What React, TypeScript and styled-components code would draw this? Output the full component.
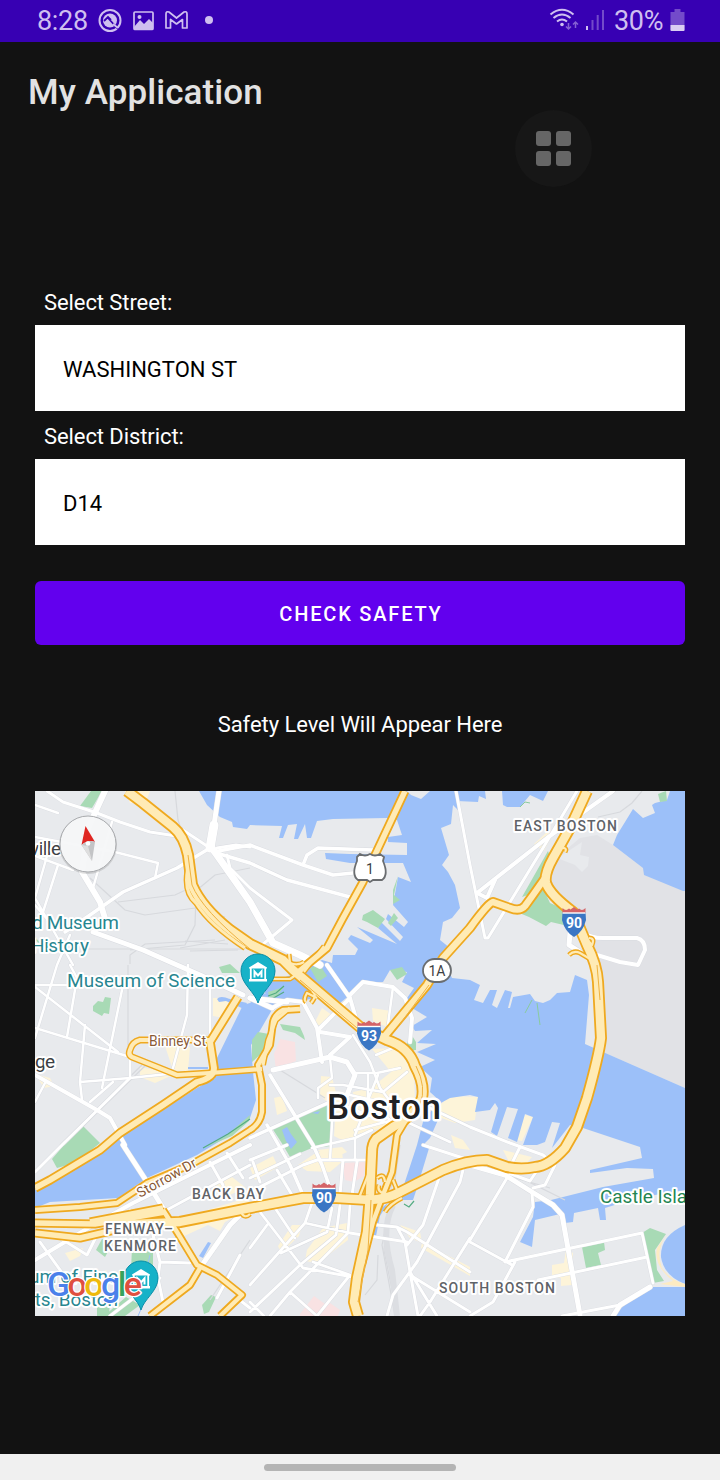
import React from 'react';
import styled, { createGlobalStyle } from 'styled-components';

const GlobalStyle = createGlobalStyle`
  * { box-sizing: border-box; }
  body { margin: 0; background: #121212; font-family: Roboto, sans-serif; }
`;

const Screen = styled.div`
  position: relative;
  display: flex;
  flex-direction: column;
  width: 720px;
  height: 1480px;
  background: #121212;
  overflow: hidden;
`;

const StatusBar = styled.header`
  display: flex;
  align-items: center;
  justify-content: space-between;
  flex: none;
  height: 42px;
  padding: 0 35px 0 37px;
  background: #3700b3;
  color: #cfbff0;
`;

const StatusGroup = styled.div<{ $gap: number }>`
  display: flex;
  align-items: center;
  gap: ${(p) => p.$gap}px;
  height: 42px;
`;

const StatusText = styled.span<{ $width: number }>`
  width: ${(p) => p.$width}px;
  font-size: 27px;
  line-height: 43px;
  letter-spacing: -0.3px;
  white-space: nowrap;
`;

const TitleBar = styled.div`
  display: flex;
  align-items: center;
  flex: none;
  height: 98px;
  padding: 4px 28px 0;
`;

const Title = styled.h1`
  margin: 0;
  font-size: 35px;
  font-weight: 500;
  line-height: 42px;
  letter-spacing: 0.08px;
  color: #e2e2e2;
`;

const Content = styled.main`
  display: flex;
  flex-direction: column;
  flex: 1;
  padding: 137px 35px 0;
`;

const Label = styled.label`
  height: 48px;
  padding: 0 9px;
  font-size: 22px;
  line-height: 52px;
  letter-spacing: -0.08px;
  color: #fff;
`;

const Field = styled.div`
  height: 86px;
  padding: 0 28px;
  background: #fff;
  color: #000;
  font-size: 22px;
  line-height: 89px;
`;

const SafetyButton = styled.button`
  height: 64px;
  margin-top: 36px;
  padding: 2px 0 0 2px;
  border: 0;
  border-radius: 6px;
  background: #6200ee;
  color: #fff;
  font: 500 20px/24px Roboto, sans-serif;
  letter-spacing: 1.8px;
`;

const Result = styled.p`
  margin: 64px 0 50px;
  font-size: 22px;
  line-height: 32px;
  letter-spacing: -0.06px;
  text-align: center;
  color: #fff;
`;

const MapFrame = styled.svg`
  display: block;
  width: 650px;
  height: 525px;
  background: #e8eaed;
  font-family: Roboto, sans-serif;
`;

const HaloText = styled.text<{ $halo?: number }>`
  paint-order: stroke;
  stroke: #fff;
  stroke-width: ${(p) => p.$halo ?? 4}px;
  stroke-linejoin: round;
`;

const NavBar = styled.footer`
  display: flex;
  align-items: center;
  justify-content: center;
  flex: none;
  height: 26px;
  background: #f0f0f0;
`;

const NavPill = styled.div`
  width: 192px;
  height: 7px;
  margin-top: 1px;
  border-radius: 4px;
  background: #b4b4b4;
`;

const AssistiveButton = styled.div`
  position: absolute;
  left: 515px;
  top: 110px;
  display: grid;
  grid-template-columns: 15px 15px;
  gap: 5px;
  place-content: center;
  width: 77px;
  height: 77px;
  border-radius: 50%;
  background: #171717;
`;

const Tile = styled.span`
  height: 15px;
  border-radius: 3px;
  background: #666;
`;

const WATER = [
  // Inner harbor, Mystic mouth and South Boston docks
  'M199 791 L207 805 220 817 232 822 233 827 247 829 250 825 282 826 279 838 283 838 288 825 297 824 294 839 298 839 305 824 307 838 311 838 317 821 333 819 387 818 397 820 402 835 388 837 388 842 407 843 407 855 350 854 325 853 326 859 350 863 403 863 411 882 398 877 393 905 408 922 404 927 388 914 386 919 403 937 400 941 381 922 378 928 397 944 357 927 373 940 370 943 351 935 348 939 358 949 355 955 333 955 332 963 322 960 300 972 262 985 268 1000 290 1002 318 998 340 1003 350 995 363 982 383 982 390 970 407 972 402 982 414 988 407 998 412 1008 427 1017 412 1026 415 1031 432 1030 417 1043 436 1044 417 1052 435 1060 420 1067 432 1078 430 1092 441 1102 438 1120 430 1138 423 1145 430 1145 417 1188 413 1200 399 1200 417 1145 424 1118 437 1105 450 1098 470 1095 478 1097 475 1112 490 1110 495 1103 498 1108 491 1132 497 1136 507 1107 518 1109 508 1138 517 1142 525 1114 533 1117 523 1145 537 1145 545 1142 552 1122 560 1123 552 1148 570 1125 583 1128 640 1147 642 1158 590 1170 590 1173 627 1168 653 1169 654 1178 603 1187 551 1200 565 1223 573 1222 574 1213 598 1208 600 1220 606 1220 605 1208 637 1198 685 1190 685 1088 603 1052 585 1044 589 995 587 980 575 975 570 992 557 993 550 1000 543 1003 535 1001 530 994 513 997 510 1008 508 1008 512 992 505 990 497 1008 492 1005 497 990 490 990 483 1003 474 1000 480 985 470 980 452 978 443 958 450 948 440 940 443 922 452 918 460 908 455 885 448 872 442 865 449 855 441 828 451 824 453 805 460 812 457 801 478 802 479 796 486 799 485 791 430 791 421 799 411 795 407 791Z',
  'M551 1200 L535 1202 533 1217 520 1242 532 1247 535 1220 560 1214 555 1205Z',
  'M502 791 L503 805 507 807 520 807 530 795 543 801 548 791Z',
  'M670 791 L667 800 655 803 652 805 655 813 643 818 633 809 617 835 613 845 643 868 644 875 683 891 685 891 685 791Z',
  'M685 1225 Q660 1236 661 1257 Q664 1276 685 1284Z',
  'M653 1287 L685 1287 685 1316 613 1316 630 1300Z',
  // Charles river
  'M250 1003 L243 1005 217 1058 215 1078 197 1088 100 1150 35 1190 35 1208 50 1202 118 1198 147 1178 197 1155 230 1135 250 1118 256 1100 253 1072 251 1045 258 1034 273 1008 285 997 262 993Z',
  'M217 999 Q220 995 230 999 L247 1003 244 1009 226 1001 219 1002Z',
  'M188 1067 H208 V1069 H188Z',
  'M199 1256 L208 1242 211 1243 203 1258Z',
  'M376 1212 L388 1203 380 1216 376 1236 371 1237Z',
];

const PARKS = [
  'M80 806 L91 791 102 791 92 808Z', 'M35 937 L43 946 35 940Z',
  'M93 1006 L98 1001 103 1002 105 997 111 998 109 1014 104 1013 102 1016 93 1011Z',
  'M219 967 L230 964 240 973 222 973Z', 'M64 1145 L83 1126 96 1139 100 1143 75 1163 57 1168 52 1159Z',
  'M548 851 L522 897 528 895 517 912 529 917 546 926 551 922 568 926 566 910 550 903 543 888 552 861Z',
  'M363 915 L373 910 385 919 378 928 367 922 362 920Z', 'M398 876 L394 895 400 900 393 904 393 890Z',
  'M388 923 L394 913 398 918 391 926Z', 'M390 970 L402 967 407 974 397 980Z',
  'M404 1051 L411 1034 416 1042 416 1050Z',
  'M330 1101 L272 1128 283 1145 290 1157 312 1148 331 1146 334 1115Z',
  'M280 1024 L300 1027 304 1036 305 1040 295 1033 283 1030Z',
  'M252 1040 L258 1032 269 1034 262 1053 252 1062Z', 'M310 968 L320 965 327 976 318 982Z',
  'M268 992 L284 987 277 996 270 1000Z', 'M204 1148 L226 1136 250 1115 249 1121 232 1136Z',
  'M582 1247 L604 1242 605 1250 598 1253 601 1265 586 1268Z',
  'M642 1233 L650 1228 666 1234 655 1250 657 1270 664 1281 653 1283Z',
  'M658 794 L666 791 667 801 660 802Z', 'M102 1239 L114 1241 105 1257 96 1250Z',
  'M132 1248 L153 1248 153 1265 131 1270Z', 'M104 1316 L126 1297 140 1305 125 1316Z',
  'M202 1305 L211 1295 216 1297 209 1312 204 1314Z', 'M97 1304 L110 1301 109 1316 97 1316Z',
];

const COMMERCIAL = [
  'M213 998 L229 998 228 1010 224 1018 213 1016Z', 'M165 1046 L190 1047 188 1071 173 1070Z',
  'M140 1067 L175 1074 155 1083 140 1077Z', 'M35 1074 L50 1078 54 1086 44 1088Z',
  'M125 791 L150 791 145 804 130 803Z', 'M534 844 L548 831 552 836 544 851Z',
  'M372 1008 L391 1011 387 1027 373 1021Z', 'M321 1076 L332 1077 336 1093 348 1093 346 1105 328 1103 320 1095Z',
  'M322 1008 L332 1015 322 1028 315 1022Z', 'M372 1049 L398 1048 414 1074 415 1100 395 1125 346 1137 340 1122 355 1109 353 1092 371 1088 391 1072Z',
  'M440 1105 L450 1096 478 1097 475 1120 455 1123 439 1117Z', 'M525 1115 L533 1117 522 1141 516 1140Z',
  'M250 1168 L273 1156 278 1167 255 1180Z', 'M298 1165 L317 1152 342 1150 343 1161 330 1172 307 1171Z',
  'M278 1246 L292 1225 302 1225 299 1236 281 1253Z', 'M307 1250 L323 1228 347 1223 348 1240 318 1263 305 1261Z',
  'M400 1225 L420 1232 422 1243 410 1238Z', 'M422 1242 L470 1267 470 1276 421 1248Z',
  'M552 1265 L564 1263 566 1249 573 1253 572 1285 561 1286 561 1278 552 1277Z',
  'M165 1223 L250 1197 246 1211 225 1222 220 1231 208 1225 180 1238Z',
  'M65 1253 L83 1248 80 1256 70 1261Z', 'M84 1278 L107 1270 95 1285Z',
  'M211 1186 L232 1177 246 1188 225 1197Z', 'M503 1150 L532 1157 525 1165 508 1160Z',
  'M336 1105 L352 1108 350 1128 356 1135 346 1142 334 1136Z', 'M274 1098 L282 1096 287 1111 277 1115Z',
  'M318 1150 L342 1147 347 1152 330 1160Z', 'M451 1135 L463 1140 470 1150 455 1148Z',
];

const MEDICAL = ['M280 1039 L295 1042 296 1061 276 1070 274 1054Z', 'M342 1163 L365 1162 364 1176 354 1182 345 1180Z', 'M300 1314 L314 1296 325 1304 330 1303 340 1310 338 1316 300 1316Z'];

const RAIL = [
  'M175 791 L178 820 190 855 196 895 195 925 185 945 130 950', 'M90 878 L125 910 145 915 195 908 225 917', 'M118 902 L175 895 190 888',
  'M80 949 H245', 'M130 964 V955 L145 944 215 940', 'M60 1145 L145 1062 M64 1145 L149 1062', 'M180 948 L225 940 M185 941 L228 944 M190 951 L238 950',
  'M128 965 V1057', 'M280 1070 L325 1098', 'M400 1145 L392 1200 382 1245 395 1316', 'M397 1145 L388 1210 384 1250 390 1280 398 1316', 'M378 1255 L377 1280 365 1295',
  'M210 1300 L250 1240', 'M598 817 L620 812 632 803 642 791', 'M470 1165 L550 1188', 'M505 1170 L565 1200', 'M250 868 L215 875 197 890',
];

const STREETS: [number, string][] = [
  [3, 'M47 791 L63 802 97 813 120 822 150 832 183 837 M180 828 L210 848'],
  [6, 'M105 791 L88 828 82 872 100 902 107 925'],
  [5, 'M93 932 L143 950 177 965 200 975 243 995 M250 998 L287 1002'],
  [7, 'M212 848 L250 902 273 943 300 955 320 965'],
  [5, 'M219 791 L214 825 M250 998 L272 1008'],
  [9, 'M214 825 L210 848'],
  [3.5, 'M210 848 L177 868 123 892 90 915 65 932'],
  [2.5, 'M35 837 L115 852 158 863 155 878 M112 822 L93 888 M47 856 L35 898 M35 856 L73 870 M58 865 L43 912 M35 898 L73 965 M70 935 L57 965 35 1038 M35 805 L58 813 M35 905 L48 920'],
  [3.5, 'M213 852 L250 845 303 865 333 875 353 873 M303 865 L307 855 318 848 373 850 M213 852 L250 863 287 880 350 897'],
  [3, 'M217 848 L236 845 250 847 M227 855 L230 868 250 888 292 920 262 945 M456 791 L470 865 485 938 488 938 543 848 577 791'],
  [4, 'M613 791 L547 838 477 893 487 898 495 880'],
  [5, 'M570 933 L569 945 580 952'],
  [4, 'M585 933 Q590 938 603 938 L637 938 Q645 940 645 950 L638 965 620 962 597 955'],
  [2.5, 'M70 965 L77 978 67 1037 M35 987 L118 1052 M35 1028 L130 1057 V1078 M85 1025 L80 1082 82 1100 M80 1082 L130 1078 177 1073 M123 985 L102 1088 M188 965 L187 1015 173 1068 M210 985 V1042 M35 985 H97 M35 1102 L45 1083 M113 1082 L90 1102'],
  [4, 'M35 1075 L97 1110 110 1118 125 1145'],
  [3, 'M130 1078 L62 1145 35 1172'],
  [5, 'M123 1145 L147 1182 163 1208'],
  [4, 'M327 965 L350 998 357 1022 M350 998 L320 1028 M350 995 L363 982 393 987 405 998 412 1018 410 1042'],
  [4, 'M272 1008 L287 1000 303 1002 317 1028 322 1062 M320 1032 L350 1037 330 1055'],
  [5, 'M273 1070 L330 1057 347 1062 355 1075 347 1095'],
  [2.5, 'M393 987 L387 1032 M330 1058 L332 1078 318 1088 V1098 M353 1035 L370 1062 380 1088 393 1105 M355 1073 H377 L400 1068 M330 1085 H343 L383 1092 407 1072 M368 1075 V1102 L355 1135 M378 1075 L368 1100 390 1120 M400 1045 L376 1055 M350 1095 L395 1105 M343 1105 L400 1128 M355 1130 L412 1115 M333 1105 L330 1160 M312 1148 L355 1138 372 1130 M355 1138 V1160'],
  [3.5, 'M270 1075 L313 1145 322 1165 330 1188 M250 1138 L330 1102 M267 1125 L290 1165 303 1195'],
  [3, 'M430 1108 L470 1127 510 1143 543 1155 555 1165 545 1185 533 1188 M407 1122 L450 1142 M423 1145 L463 1158'],
  [5, 'M470 1165 L505 1175 532 1192 553 1205 562 1215 580 1315'],
  [3, 'M507 1178 L470 1240 M532 1193 L533 1207 505 1262 M470 1242 L512 1265 M505 1262 L642 1233 653 1283 M538 1280 L647 1257 M562 1316 L620 1305 M515 1262 L493 1302 470 1316 M500 1170 L530 1181 536 1172 M512 1163 L520 1147'],
  [5, 'M613 1316 L620 1305 650 1287'],
  [3, 'M377 1225 L397 1227 407 1232 470 1272 M397 1227 L405 1242 410 1272 418 1316 M440 1175 L423 1225 407 1245 M463 1170 L460 1182 417 1262 393 1295 387 1316 M410 1272 L437 1316 M410 1275 L470 1312 M470 1238 L430 1302 420 1316'],
  [2.8, 'M260 1212 L303 1268 353 1277 M305 1223 L350 1233 407 1242 M313 1200 L305 1223 250 1285 M332 1208 L327 1232 281 1253 M350 1205 L348 1233 290 1292 270 1316 M340 1205 L336 1235 300 1265 250 1312 M273 1205 L295 1238 M267 1225 L250 1248 M290 1292 L317 1316 M250 1302 L264 1316 M313 1262 L350 1275 317 1316'],
  [3, 'M250 1160 L287 1145 M250 1192 L303 1165 317 1160 H375 M343 1160 L340 1195 M357 1162 L352 1195 M250 1178 L300 1154 M253 1162 L260 1182 M277 1170 L292 1195'],
  [4, 'M35 1260 L93 1225 133 1203 250 1145'],
  [3, 'M163 1212 L250 1165 M210 1162 L223 1185 M227 1153 L243 1178 M40 1242 L73 1288 M60 1238 L87 1255 97 1235 M153 1235 L160 1262 190 1263 M160 1262 L158 1278 163 1302 M240 1255 L217 1298 M237 1298 L250 1308 M160 1278 L110 1316 M130 1210 L132 1232 M137 1210 L139 1232'],
  [5, 'M250 1205 L230 1225 200 1268'],
];

const HIGHWAYS: [number, string][] = [
  [6, 'M190 860 Q181 890 196 903 Q210 925 245 948 M263 1065 L268 1040 276 1020 290 1008'],
  [5, 'M289 954 L290 963 Q298 966 304 962 M272 979 H290 L300 972 M317 998 L307 993 Q303 1000 306 1002 M311 1003 Q318 995 312 991 M324 946 L304 972'],
  [7, 'M210 1040 L140 1040 Q132 1042 130 1050 Q128 1055 132 1057 L177 1075 210 1073 262 1069'],
  [9.5, 'M35 1188 L50 1180 80 1162 100 1150 120 1133 163 1105 197 1082 Q214 1078 214 1068 L210 1042 238 997'],
  [8, 'M300 1009 L283 1010 Q275 1014 273 1022 L270 1045 258 1065 262 1085 262 1112 Q260 1124 250 1130 L230 1143 190 1165 147 1183 117 1203 80 1207 35 1210'],
  [9, 'M35 1233 L80 1238 123 1228 180 1222'],
  [9, 'M35 1223 L95 1224 165 1212 M90 1222 L163 1208'],
  [8, 'M163 1210 L177 1232 197 1265 217 1275 242 1295 220 1316 M200 1268 L190 1285 150 1316'],
  [8, 'M406 1120 L397 1135 392 1172 383 1195 373 1222 362 1265'],
  [5, 'M368 1175 L359 1198 M377 1178 Q384 1172 385 1182 M379 1185 Q377 1190 382 1193 M393 1180 L397 1190 408 1190 M385 1212 Q390 1204 402 1198 M240 1210 Q244 1220 250 1214 M564 905 L546 888 M560 848 Q568 847 565 852 M582 934 L592 945 Q595 938 589 938 M569 955 Q574 950 580 953 L597 963'],
  [10, 'M545 878 L533 895 525 906 Q520 912 510 908 L493 902 Q489 902 470 928 L443 958 427 985 384 1037'],
  [12, 'M587 791 L570 828 553 858 Q544 874 546 883 Q550 895 573 912 L587 945 Q597 965 598 982 L601 1038 Q599 1055 587 1098 L577 1127 565 1148 Q549 1166 535 1167 Q522 1170 507 1167 L487 1160 Q467 1160 443 1170 L400 1192 Q388 1199 370 1200 L337 1198 303 1198 250 1208 180 1222 113 1225'],
  [9, 'M405 791 L375 855 363 882 343 918 327 948 297 973'],
  [12, 'M127 791 L143 803 173 827 Q184 836 188 855 L192 885 Q202 908 230 930 L250 944 283 960 293 970 360 1027 387 1040 Q409 1047 415 1066 Q425 1084 422 1098 Q417 1113 393 1127 L376 1139 Q372 1144 372 1152 L370 1195 367 1232 357 1278 354 1302 358 1316'],
];

const INNER_LINES = ['M192 885 Q202 910 250 949', 'M416 1066 Q427 1088 420 1104', 'M300 980 L357 1028', 'M597 965 L600 1000', 'M371 1200 L368 1250 358 1302', 'M188 855 L192 885', 'M400 1024 L429 985'];

const InterstateShield = ({ x, y, n }: { x: number; y: number; n: string }) => (
  <g transform={`translate(${x} ${y})`}>
    <path d="M-11.5-9 H11.5 L12-1 Q9 11 0 16 Q-9 11-12-1Z" fill="#3a76c4" />
    <path d="M-11.5-13 Q-8-9.500-5-12.500 L-3.500-11.500 0-14 3.500-11.500 5-12.500 Q8-9.500 11.5-13 L11.5-8 H-11.5Z" fill="#d46468" />
    <path d="M-11.5-8 H11.5" stroke="#fff" strokeWidth="1.4" />
    <text x="0" y="6.500" textAnchor="middle" fontSize="14" fontWeight="700" fill="#fff">{n}</text>
  </g>
);

const MuseumPin = ({ x, y }: { x: number; y: number }) => (
  <g transform={`translate(${x} ${y})`}>
    <path d="M0 31 C-3 20-17 12-17 -1 A17 17 0 0 1 17 -1 C17 12 3 20 0 31Z" fill="#17b2c8" stroke="#0a8fa8" strokeWidth="1" />
    <path d="M-9-4.500 L0-10 9-4.500 V-3.500 H-9Z M-9 7 H9 V9.500 H-9Z" fill="#fff" />
    <path d="M-7.200-4 V8 M7.200-4 V8" stroke="#fff" strokeWidth="1.800" />
    <path d="M-3.500 5.500 V-0.500 L0 3.500 3.500-0.500 V5.500" fill="none" stroke="#fff" strokeWidth="2" />
  </g>
);

type LabelSpec = { t: string; x: number; y: number; s: number; w: number; c: string; b?: number; h?: number };
const LABELS: LabelSpec[] = [
  { t: 'ville', x: 30, y: 855, s: 19, w: 31, c: '#3c4043' },
  { t: 'ge', x: 35, y: 1068, s: 19, w: 20, c: '#3c4043' },
  { t: 'EAST BOSTON', x: 514, y: 830.5, s: 14, w: 103, c: '#5f6368', b: 500 },
  { t: 'BACK BAY', x: 192, y: 1199, s: 14, w: 72, c: '#5f6368', b: 500 },
  { t: 'FENWAY–', x: 105, y: 1234, s: 14, w: 68, c: '#5f6368', b: 500 },
  { t: 'KENMORE', x: 104, y: 1251, s: 14, w: 72, c: '#5f6368', b: 500 },
  { t: 'SOUTH BOSTON', x: 439, y: 1293, s: 14, w: 116, c: '#5f6368', b: 500 },
  { t: 'd Museum', x: 32, y: 929, s: 19, w: 87, c: '#278690' },
  { t: 'History', x: 31, y: 952, s: 19, w: 58, c: '#278690' },
  { t: 'Museum of Science', x: 67, y: 987, s: 19, w: 168, c: '#278690' },
  { t: 'um of Fine', x: 29, y: 1283, s: 19, w: 89, c: '#278690' },
  { t: 'rts, Boston', x: 28, y: 1306, s: 19, w: 90, c: '#278690' },
  { t: 'Castle Isla', x: 600, y: 1203, s: 19, w: 87, c: '#238551' },
  { t: 'Binney St', x: 149, y: 1046, s: 14, w: 57, c: '#8a5a36', h: 3 },
];

const BostonMap = () => (
  <MapFrame viewBox="35 791 650 525">
    <path d="M560 855 L580 838 597 835 613 845 643 868 685 891 V1088 L603 1052 598 965 578 925 552 893 550 870Z" fill="#e1e2e6" />
    <path d="M557 858 L575 865 582 872 588 866 589 857 580 855 582 842 570 850Z" fill="#e8eaed" />
    {COMMERCIAL.map((d) => <path key={d} d={d} fill="#fdf4d9" />)}
    {MEDICAL.map((d) => <path key={d} d={d} fill="#f9e2e3" />)}
    {WATER.map((d) => <path key={d} d={d} fill="#9cc0f9" />)}
    {PARKS.map((d) => <path key={d} d={d} fill="#a8dab5" />)}
    <path d="M667 1234 Q655 1250 662 1268 Q670 1280 685 1284 V1287 L660 1284 673 1281 Q653 1265 657 1248Z" fill="#fdebc2" />
    <path d="M282 1130 L287 1127 291 1134 297 1142 291 1149 286 1141Z M312 1113 L320 1111 318 1114Z" fill="#9cc0f9" />
    <path d="M145 1300 L138 1316 M150 1255 L147 1267" stroke="#9cc0f9" />
    <path d="M520 807 L525 802 530 803 M525 1013 L532 1000 M537 1003 L540 1025" fill="none" stroke="#8acb9d" />
    <path d="M203 1148 L228 1134 250 1119 M268 996 L276 993 284 986 M270 1000 L284 992 M404 1204 L409 1207 414 1201" fill="none" stroke="#54ac82" strokeWidth="1.2" />
    <g fill="none" stroke="#d7d9dd" strokeWidth="1.2">{RAIL.map((d) => <path key={d} d={d} />)}</g>
    <path d="M393 1205 Q380 1230 392 1270 L397 1316" fill="none" stroke="#dcdee2" strokeWidth="6" />
    <g fill="none" stroke="#d9dbe0" strokeLinejoin="round" strokeLinecap="round">
      {STREETS.map(([w, d]) => <path key={d} d={d} strokeWidth={w + 0.8} />)}
    </g>
    <g fill="none" stroke="#fff" strokeLinejoin="round" strokeLinecap="round">
      {STREETS.map(([w, d]) => <path key={d} d={d} strokeWidth={w} />)}
    </g>
    <g fill="none" stroke="#efa91f" strokeLinejoin="round">
      {HIGHWAYS.map(([w, d]) => <path key={d} d={d} strokeWidth={w} />)}
    </g>
    <g fill="none" stroke="#ffebb5" strokeLinejoin="round">
      {HIGHWAYS.map(([w, d]) => <path key={d} d={d} strokeWidth={w - (w > 7 ? 3.6 : 2.8)} />)}
    </g>
    <g fill="none" stroke="#efb240" strokeWidth="1">{INNER_LINES.map((d) => <path key={d} d={d} />)}</g>

    {LABELS.map((l) => (
      <HaloText key={l.t} x={l.x} y={l.y} fontSize={l.s} fill={l.c} fontWeight={l.b ?? 400} textLength={l.w} $halo={l.h}>{l.t}</HaloText>
    ))}
    <HaloText transform="translate(140 1198) rotate(-29)" fontSize="14" fill="#8a5a36" textLength="66" $halo={3}>Storrow Dr</HaloText>
    <HaloText x="327" y="1119" fontSize="35" fontWeight="500" fill="#202124" textLength="114" $halo={5}>Boston</HaloText>

    <path d="M357 857 L360 854 Q365 857 370 854 Q375 857 380 854 L384 857 383 861 Q389 875 382 880 L373 880 370 882 367 880 358 880 Q351 875 357 861Z" fill="#fff" stroke="#6a6d70" strokeWidth="1.8" />
    <text x="370" y="874" textAnchor="middle" fontSize="14" fill="#3c4043">1</text>
    <rect x="423" y="959" width="28" height="23" rx="11.5" fill="#fff" stroke="#6a6d70" strokeWidth="1.8" />
    <text x="437" y="976" textAnchor="middle" fontSize="14" fill="#3c4043">1A</text>
    <InterstateShield x={574} y={921} n="90" />
    <InterstateShield x={369} y={1034.5} n="93" />
    <InterstateShield x={324} y={1196.5} n="90" />
    <MuseumPin x={258} y={972} />
    <MuseumPin x={141} y={1279} />

    <circle cx="88" cy="845" r="29" fill="#777" opacity=".25" />
    <circle cx="88" cy="844" r="28" fill="#f8f9fa" fillOpacity=".94" stroke="#a9abae" />
    <path d="M85.500 826 L95 842 Q88 839 81.500 845Z" fill="#df2622" />
    <path d="M81.500 845 Q89 839 95 842 L92 861Z" fill="#c3c4c6" />
    <path d="M81.500 845 L88 846 92 861Z" fill="#dedede" />
    <circle cx="88" cy="843.500" r="2.300" fill="#fff" />

    <HaloText x="47" y="1295.500" fontSize="34" fontWeight="500" textLength="95" $halo={2.5}>
      <tspan fill="#4a80ea">G</tspan><tspan fill="#df5040">o</tspan><tspan fill="#eeb90c">o</tspan><tspan fill="#4a80ea">g</tspan><tspan fill="#36a35a">l</tspan><tspan fill="#df5040">e</tspan>
    </HaloText>
  </MapFrame>
);

const NotificationIcons = () => (
  <svg width="118" height="26" viewBox="98 8 118 26" fill="none" stroke="#cfbff0">
    <circle cx="110" cy="20.500" r="10.500" strokeWidth="2" />
    <circle cx="110" cy="20.500" r="7" fill="#cfbff0" stroke="none" />
    <path d="M104 21 L108 17 111 20 M108 18 L118 29" stroke="#3700b3" strokeWidth="1.800" />
    <path d="M113 24 L118 28" strokeWidth="1.800" />
    <rect x="134" y="12" width="19" height="17.500" rx="1" strokeWidth="1.700" />
    <path d="M134 27 L140 20 144 24 149 19 153 23 V30 H134Z" fill="#cfbff0" stroke="none" />
    <circle cx="139.500" cy="17" r="2" fill="#cfbff0" stroke="none" />
    <path d="M166 28 V14 Q166 11 169 12 L176.500 18 184 12 Q187 11 187 14 V28 H182.500 V19.500 L176.500 24 170.500 19.500 V28Z" strokeWidth="1.700" strokeLinejoin="round" />
    <circle cx="209" cy="20" r="4" fill="#cfbff0" stroke="none" />
  </svg>
);

const SignalIcons = () => (
  <svg width="56" height="26" viewBox="548 8 56 26" fill="none" stroke="#cfbff0" strokeWidth="2">
    <path d="M549.500 14.500 Q561 5 572.500 14.500 M552.500 18 Q561 11 569.500 18 M556 21.500 Q561 17.500 566 21.500" />
    <circle cx="561" cy="24.500" r="1.800" fill="#cfbff0" stroke="none" />
    <path d="M567.500 23 V29 M565 26.500 L567.500 29 570 26.500 M574.500 28 V22 M572 24.500 L574.500 22 577 24.500" stroke="#8560d3" strokeWidth="1.500" />
    <path d="M586 26 V30" />
    <path d="M591.500 20 V30 M596.700 15 V30 M602 10 V30" stroke="#734bca" />
  </svg>
);

const BatteryIcon = () => (
  <svg width="15" height="24" viewBox="0 0 15 24">
    <path d="M4.500 0 H10.500 V3 H14.500 V21 Q14.500 22 13.500 22 H1.500 Q.5 22 .5 21 V3 H4.500Z" fill="#734bca" />
    <path d="M.5 16 H14.500 V21 Q14.500 22 13.500 22 H1.500 Q.5 22 .5 21Z" fill="#dacdf2" />
  </svg>
);

export default function App() {
  return (
    <Screen>
      <GlobalStyle />
      <StatusBar>
        <StatusGroup $gap={9}>
          <StatusText $width={52}>8:28</StatusText>
          <NotificationIcons />
        </StatusGroup>
        <StatusGroup $gap={9}>
          <SignalIcons />
          <StatusText $width={47}>30%</StatusText>
          <BatteryIcon />
        </StatusGroup>
      </StatusBar>
      <TitleBar><Title>My Application</Title></TitleBar>
      <Content>
        <Label>Select Street:</Label>
        <Field>WASHINGTON ST</Field>
        <Label>Select District:</Label>
        <Field>D14</Field>
        <SafetyButton>CHECK SAFETY</SafetyButton>
        <Result>Safety Level Will Appear Here</Result>
        <BostonMap />
      </Content>
      <NavBar><NavPill /></NavBar>
      <AssistiveButton><Tile /><Tile /><Tile /><Tile /></AssistiveButton>
    </Screen>
  );
}
